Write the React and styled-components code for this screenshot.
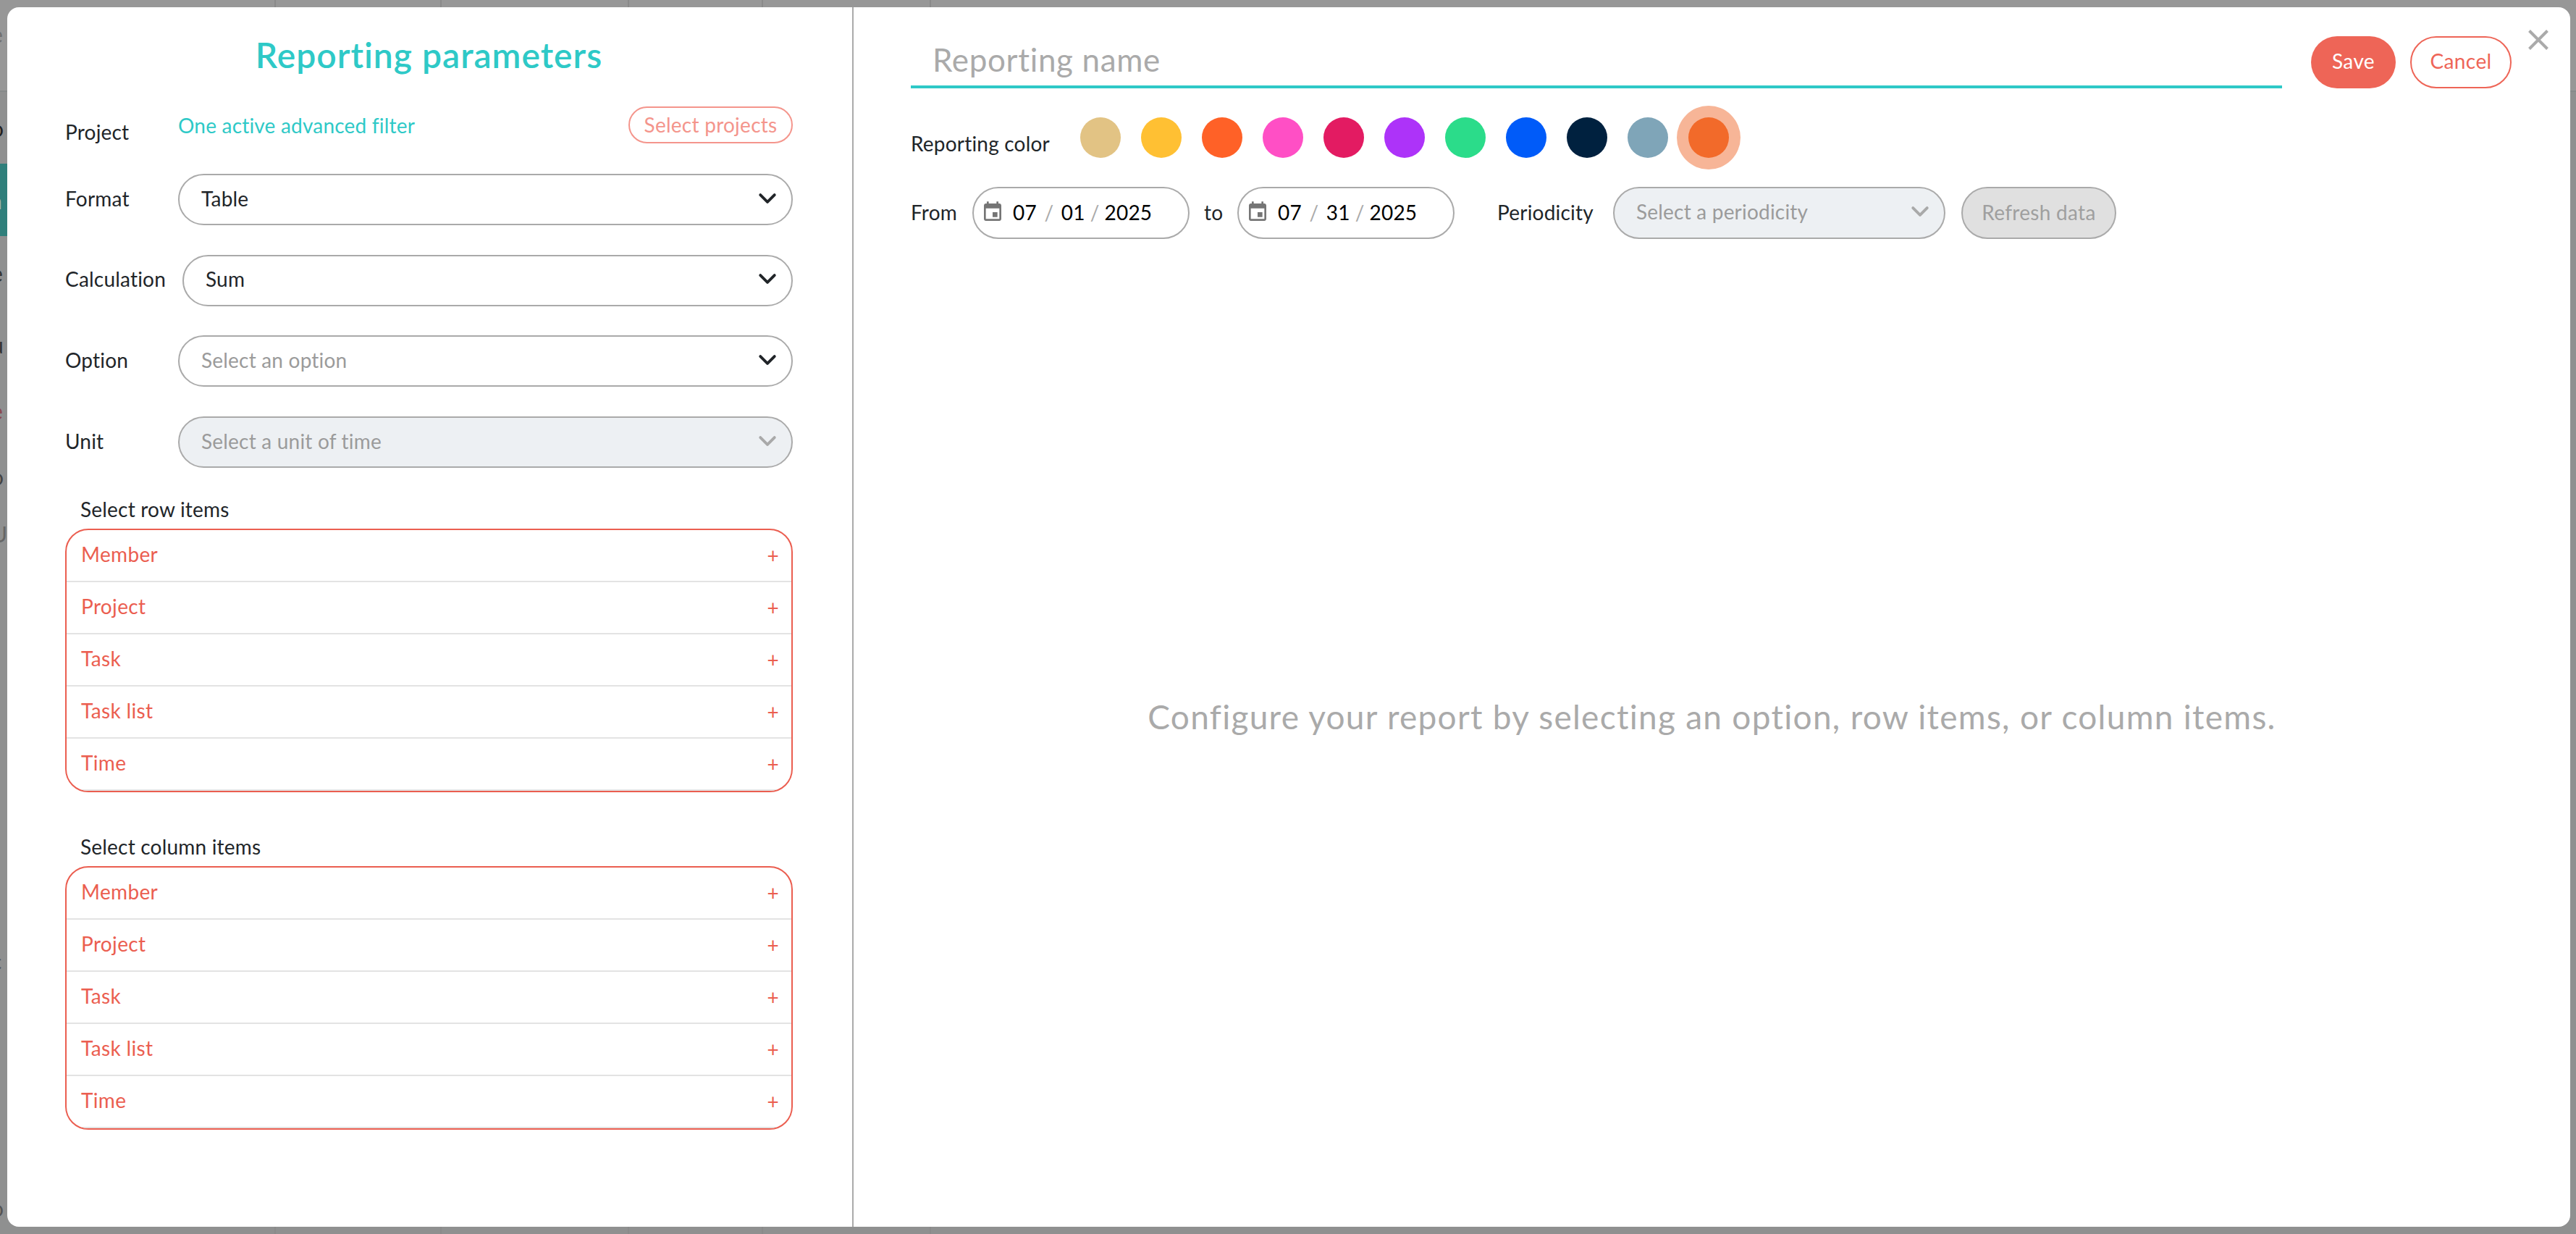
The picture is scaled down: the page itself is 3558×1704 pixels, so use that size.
import React from "react";
import styled, { createGlobalStyle } from "styled-components";

const Global = createGlobalStyle`
  html, body { margin: 0; padding: 0; background: #929292; overflow: hidden; }
  * { box-sizing: border-box; }
  body { font-family: Lato, "Noto Sans", "Liberation Sans", sans-serif; font-size: 28px; letter-spacing: 0.2px; color: #212529; }
`;

const red = "#ee6557";
const lineRed = "#eb5e50";
const teal = "#2ec9c7";

const Page = styled.div`
  position: relative;
  width: 3558px;
  height: 1704px;
  padding: 10px 8px 10px 10px;
  background: linear-gradient(#979797 0 125px, #8f9090 127px);
  overflow: hidden;
`;
const BehindLayer = styled.div`
  position: absolute;
  inset: 0;
`;
const HeaderLine = styled.div`
  position: absolute;
  left: 0;
  right: 0;
  top: 125px;
  height: 2px;
  background: #868a8a;
`;
const ColumnLine = styled.div`
  position: absolute;
  top: 0;
  bottom: 0;
  width: 2px;
  left: ${(p) => p.$x}px;
  background: #8a8a8a;
`;
const TealBand = styled.div`
  position: absolute;
  left: 0;
  top: 226px;
  width: 10px;
  height: 100px;
  background: #2f7f7b;
`;
const Glyph = styled.span`
  position: absolute;
  left: -12px;
  top: ${(p) => p.$y - 17}px;
  line-height: 34px;
  font-size: 30px;
  color: ${(p) => p.$color};
`;

const Modal = styled.div`
  position: relative;
  display: flex;
  width: 3540px;
  height: 1684px;
  background: #fff;
  border-radius: 16px;
`;
const LeftPane = styled.section`
  flex: none;
  width: 1169px;
  padding: 38px 82px 0 80px;
  border-right: 2px solid #aaa;
  display: flex;
  flex-direction: column;
`;
const Title = styled.h1`
  margin: 0 0 43px;
  font-size: 48px;
  line-height: 56px;
  font-weight: 600;
  letter-spacing: 1px;
  text-align: center;
  color: ${teal};
`;
const ProjectRow = styled.div`
  display: flex;
  align-items: center;
  height: 51px;
  margin-bottom: 42px;
`;
const FieldLabel = styled.span`
  flex: none;
  width: ${(p) => p.$w || 156}px;
  padding-top: ${(p) => p.$drop || 0}px;
  padding-bottom: ${(p) => (p.$drop ? 0 : 4)}px;
`;
const FilterLink = styled.a`
  flex: 1;
  color: ${teal};
`;
const GhostButton = styled.button`
  height: 51px;
  width: 227px;
  padding: 0 0 2px;
  font: inherit;
  letter-spacing: 0.25px;
  color: #f4958c;
  background: #fff;
  border: 2px solid #f4958c;
  border-radius: 26px;
`;
const FieldRow = styled.div`
  display: flex;
  align-items: center;
  margin-bottom: ${(p) => (p.$last ? 0 : 40.7)}px;
`;
const SelectBox = styled.div`
  flex: 1;
  height: ${(p) => p.$h || 71}px;
  display: flex;
  align-items: center;
  justify-content: space-between;
  padding: 0 20px 4px 30px;
  border: 2px solid #aaa;
  border-radius: 36px;
  background: ${(p) => (p.$disabled ? "#edf0f3" : "#fff")};
  color: ${(p) => (p.$muted ? "#9b9b9b" : "#212529")};
`;
const Chevron = ({ color }) => (
  <svg width="26" height="26" viewBox="0 0 16 16" fill="none">
    <path d="M2 5l6 6 6-6" stroke={color} strokeWidth="2.4" strokeLinecap="round" strokeLinejoin="round" />
  </svg>
);
const SectionLabel = styled.div`
  padding-left: 21px;
  line-height: 36px;
  margin-bottom: 9px;
  margin-top: ${(p) => p.$top}px;
`;
const ItemBox = styled.div`
  height: 364px;
  border: 2px solid ${lineRed};
  border-radius: 32px;
  overflow: hidden;
`;
const ItemRow = styled.div`
  height: 72px;
  display: flex;
  align-items: center;
  justify-content: space-between;
  padding: 0 17px 4px 20px;
  border-bottom: 2px solid #e3e3e3;
  color: ${lineRed};
  letter-spacing: 0.35px;
`;
const PlusMark = styled.span`
  margin-top: 4px;
`;
const RightPane = styled.section`
  flex: 1;
  min-width: 0;
  padding: 40px 81px 0 79px;
  display: flex;
  flex-direction: column;
`;
const HeaderRow = styled.div`
  display: flex;
  align-items: stretch;
  height: 72px;
  gap: 20px;
`;
const NameField = styled.div`
  flex: none;
  width: 1894px;
  margin-right: 20px;
  padding-left: 30px;
  border-bottom: 4px solid ${teal};
  font-size: 44px;
  letter-spacing: 0.65px;
  line-height: 64px;
  color: #aaa;
`;
const SaveButton = styled.button`
  width: 117px;
  padding: 0 0 4px;
  font: inherit;
  letter-spacing: 0.4px;
  color: #fff;
  background: ${red};
  border: 0;
  border-radius: 36px;
`;
const CancelButton = styled.button`
  width: 140px;
  padding: 0 0 4px;
  font: inherit;
  letter-spacing: 0.4px;
  color: ${red};
  background: #fff;
  border: 2px solid ${red};
  border-radius: 36px;
`;
const CloseButton = styled.button`
  position: absolute;
  top: 31px;
  right: 30px;
  width: 28px;
  height: 28px;
  padding: 0;
  border: 0;
  background: none;
  display: flex;
`;
const ColorRow = styled.div`
  display: flex;
  align-items: center;
  margin-top: 40px;
`;
const ColorLabel = styled.span`
  flex: none;
  width: 234px;
  padding-top: 15px;
`;
const Swatches = styled.div`
  display: flex;
  gap: 28px;
`;
const Swatch = styled.span`
  width: 56px;
  height: 56px;
  border-radius: 50%;
  background: ${(p) => p.$color};
  box-shadow: ${(p) => (p.$selected ? "0 0 0 16px #f7b597" : "none")};
`;
const DateRow = styled.div`
  display: flex;
  align-items: center;
  height: 72px;
  margin-top: 40px;
`;
const DateLabel = styled.span`
  flex: none;
  width: ${(p) => p.$w}px;
  margin-left: ${(p) => p.$ml || 0}px;
  padding-bottom: 3px;
`;
const DateBox = styled.div`
  flex: none;
  width: 300px;
  height: 72px;
  display: flex;
  align-items: center;
  padding: 0 0 2px 10px;
  border: 2px solid #aaa;
  border-radius: 36px;
  color: #000;
`;
const CalendarIcon = () => (
  <svg width="32" height="32" viewBox="0 0 24 24" fill="#757575" style={{ flex: "none", marginRight: 12 }}>
    <path d="M17 12h-5v5h5v-5zM16 1v2H8V1H6v2H5c-1.11 0-1.99.9-1.99 2L3 19c0 1.1.89 2 2 2h14c1.1 0 2-.9 2-2V5c0-1.1-.9-2-2-2h-1V1h-2zm3 18H5V8h14v11z" />
  </svg>
);
const DatePart = styled.span`
  flex: none;
`;
const DateSep = styled.span`
  flex: none;
  margin: 0 ${(p) => p.$m}px;
  color: #aaa;
`;
const PeriodSelect = styled(SelectBox)`
  flex: none;
  width: 459px;
`;
const RefreshButton = styled.button`
  flex: none;
  width: 214px;
  height: 72px;
  margin-left: 22px;
  padding: 0 0 2px;
  font: inherit;
  letter-spacing: 0.3px;
  color: #9f9f9f;
  background: #e0e0e0;
  border: 2px solid #aaa;
  border-radius: 36px;
`;
const EmptyState = styled.div`
  flex: 1;
  display: flex;
  align-items: center;
  justify-content: center;
  padding-bottom: 46px;
  font-size: 46px;
  letter-spacing: 1.28px;
  color: #aaa;
  white-space: nowrap;
  margin: 0 -81px 0 -79px;
`;

const glyphs = [
  ["e", 47, "#6f6f6f"], ["o", 177, "#222"], ["a", 277, "#9db7b5"], ["e", 377, "#333"],
  ["u", 476, "#333"], ["e", 567, "#8a4a52"], ["o", 658, "#444"], ["U", 737, "#666"],
  ["r", 1243, "#222"], ["c", 1327, "#555"], ["o", 1668, "#555"],
];
const lines = [379, 608, 867, 1052, 1284];
const items = ["Member", "Project", "Task", "Task list", "Time"];
const swatches = ["#e2c384", "#ffc033", "#ff6127", "#ff4fc5", "#e31b62", "#ad33f9", "#2bdc8a", "#005bf9", "#00213f", "#7fa5b8", "#f26a2a"];

const ItemList = () => (
  <ItemBox>
    {items.map((t) => (
      <ItemRow key={t}><span>{t}</span><PlusMark>+</PlusMark></ItemRow>
    ))}
  </ItemBox>
);

const DateField = ({ d }) => (
  <DateBox>
    <CalendarIcon />
    <DatePart>07</DatePart>
    <DateSep $m={10.5}>/</DateSep>
    <DatePart>{d}</DatePart>
    <DateSep $m={7}>/</DateSep>
    <DatePart>2025</DatePart>
  </DateBox>
);

export default function App() {
  return (
    <Page>
      <Global />
      <BehindLayer>
        <HeaderLine />
        {lines.map((x) => <ColumnLine key={x} $x={x} />)}
        <TealBand />
        {glyphs.map(([g, y, c]) => <Glyph key={y} $y={y} $color={c}>{g}</Glyph>)}
      </BehindLayer>
      <Modal>
        <LeftPane>
          <Title>Reporting parameters</Title>
          <ProjectRow>
            <FieldLabel $drop={18}>Project</FieldLabel>
            <FilterLink>One active advanced filter</FilterLink>
            <GhostButton>Select projects</GhostButton>
          </ProjectRow>
          <FieldRow>
            <FieldLabel>Format</FieldLabel>
            <SelectBox>Table<Chevron color="#212529" /></SelectBox>
          </FieldRow>
          <FieldRow>
            <FieldLabel $w={162}>Calculation</FieldLabel>
            <SelectBox>Sum<Chevron color="#212529" /></SelectBox>
          </FieldRow>
          <FieldRow>
            <FieldLabel>Option</FieldLabel>
            <SelectBox $muted>Select an option<Chevron color="#212529" /></SelectBox>
          </FieldRow>
          <FieldRow $last>
            <FieldLabel>Unit</FieldLabel>
            <SelectBox $muted $disabled>Select a unit of time<Chevron color="#a9a9a9" /></SelectBox>
          </FieldRow>
          <SectionLabel $top={38.9}>Select row items</SectionLabel>
          <ItemList />
          <SectionLabel $top={57}>Select column items</SectionLabel>
          <ItemList />
        </LeftPane>
        <RightPane>
          <HeaderRow>
            <NameField>Reporting name</NameField>
            <SaveButton>Save</SaveButton>
            <CancelButton>Cancel</CancelButton>
          </HeaderRow>
          <CloseButton aria-label="Close">
            <svg width="28" height="28" viewBox="0 0 28 28">
              <path d="M1.5 1.5l25 25M26.5 1.5l-25 25" stroke="#aaa" strokeWidth="4" fill="none" />
            </svg>
          </CloseButton>
          <ColorRow>
            <ColorLabel>Reporting color</ColorLabel>
            <Swatches>
              {swatches.map((c, i) => <Swatch key={c} $color={c} $selected={i === swatches.length - 1} />)}
            </Swatches>
          </ColorRow>
          <DateRow>
            <DateLabel $w={85}>From</DateLabel>
            <DateField d="01" />
            <DateLabel $w={46} $ml={20}>to</DateLabel>
            <DateField d="31" />
            <DateLabel $w={160} $ml={59}>Periodicity</DateLabel>
            <PeriodSelect $h={72} $muted $disabled>Select a periodicity<Chevron color="#a9a9a9" /></PeriodSelect>
            <RefreshButton>Refresh data</RefreshButton>
          </DateRow>
          <EmptyState>Configure your report by selecting an option, row items, or column items.</EmptyState>
        </RightPane>
      </Modal>
    </Page>
  );
}
